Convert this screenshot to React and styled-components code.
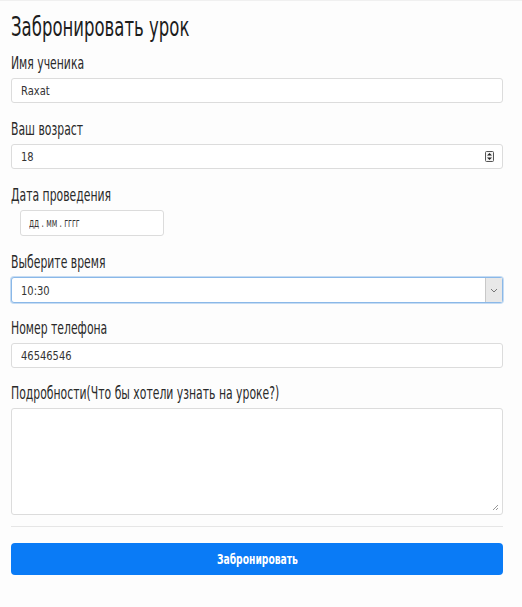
import React from "react";
import styled, { createGlobalStyle } from "styled-components";

const GlobalStyle = createGlobalStyle`
  body {
    margin: 0;
    background: #fdfdfd;
    font-family: "DejaVu Sans Condensed", "DejaVu Sans", sans-serif;
    font-stretch: condensed;
    color: #212529;
  }
`;

const Container = styled.div`
  padding: 11px 19px 0 11px;
  border-top: 1px solid #f0f0f0;
`;

// narrow look of the original font
const Narrow = styled.span`
  display: inline-block;
  white-space: nowrap;
  transform: scaleX(${(p) => p.$k || 0.67});
  transform-origin: ${(p) => (p.$center ? "center" : "left")};
`;

const Title = styled.h2`
  margin: 0 0 11px;
  font-size: 27px;
  font-weight: 400;
  line-height: 30px;
  color: #1d1d1d;
`;

const Group = styled.div`
  display: flex;
  flex-direction: column;
  align-items: ${(p) => (p.$inline ? "flex-start" : "stretch")};
  margin-bottom: ${(p) => (p.$tight ? 15 : 16)}px;
`;

const Label = styled.label`
  font-size: 18px;
  line-height: 20px;
  margin-bottom: 5px;
  color: #2a2a2a;
`;

const Field = styled.div`
  height: ${(p) => (p.$select ? 26 : 25)}px;
  box-sizing: border-box;
  display: flex;
  align-items: center;
  justify-content: space-between;
  padding: 0 8px 0 9px;
  border: 1px solid ${(p) => (p.$focus ? "#8ab8e8" : "#dcdcdc")};
  box-shadow: ${(p) => (p.$focus ? "0 0 0 1px #c6dcf3" : "none")};
  border-radius: 3px;
  background: #fff;
  font-size: 13px;
  color: #333;
  ${(p) => p.$date && `width: 144px; height: 26px; margin-left: 9px; padding-left: 8px; font-size: 12px;`}
  ${(p) => p.$select && `padding-right: 0;`}
`;

const Spin = styled.svg`
  width: 9px;
  height: 11px;
`;

const Caret = styled.div`
  width: 16px;
  height: 24px;
  border-left: 1px solid #c8c8c8;
  background: #e8e8e8;
  display: flex;
  align-items: center;
  justify-content: center;
`;

const TextArea = styled.div`
  height: 107px;
  box-sizing: border-box;
  border: 1px solid #dcdcdc;
  border-radius: 3px;
  background: #fff;
  display: flex;
  align-items: flex-end;
  justify-content: flex-end;
  padding: 3px;
`;

const Divider = styled.hr`
  border: 0;
  border-top: 1px solid #e6e6e6;
  margin: -5px 0 16px;
`;

const Button = styled.button`
  display: flex;
  justify-content: center;
  align-items: center;
  width: 100%;
  height: 32px;
  border: 0;
  border-radius: 4px;
  background: #0a7bf6;
  color: #fff;
  font-family: inherit;
  font-stretch: condensed;
  font-size: 14px;
  font-weight: 700;
`;

export default function App() {
  return (
    <>
      <GlobalStyle />
      <Container>
        <Title>
          <Narrow $k={0.68}>Забронировать урок</Narrow>
        </Title>
        <Group>
          <Label>
            <Narrow>Имя ученика</Narrow>
          </Label>
          <Field>
            <Narrow $k={0.85}>Raxat</Narrow>
          </Field>
        </Group>
        <Group>
          <Label>
            <Narrow>Ваш возраст</Narrow>
          </Label>
          <Field>
            <Narrow $k={0.85}>18</Narrow>
            <Spin viewBox="0 0 9 11">
              <rect x="0.5" y="0.5" width="8" height="10" rx="1" fill="#f4f4f4" stroke="#555" />
              <path d="M2 4.5 L4.5 2 L7 4.5 Z" fill="#222" />
              <path d="M2 6.5 L4.5 9 L7 6.5 Z" fill="#222" />
            </Spin>
          </Field>
        </Group>
        <Group $inline>
          <Label>
            <Narrow>Дата проведения</Narrow>
          </Label>
          <Field $date>
            <Narrow $k={0.68}>дд . мм . гггг</Narrow>
          </Field>
        </Group>
        <Group $tight>
          <Label>
            <Narrow>Выберите время</Narrow>
          </Label>
          <Field $focus $select>
            <Narrow $k={0.85}>10:30</Narrow>
            <Caret>
              <svg width="8" height="5" viewBox="0 0 8 5">
                <path d="M1 1 L4 4 L7 1" fill="none" stroke="#777" strokeWidth="1" />
              </svg>
            </Caret>
          </Field>
        </Group>
        <Group $tight>
          <Label>
            <Narrow>Номер телефона</Narrow>
          </Label>
          <Field>
            <Narrow $k={0.85}>46546546</Narrow>
          </Field>
        </Group>
        <Group>
          <Label>
            <Narrow>Подробности(Что бы хотели узнать на уроке?)</Narrow>
          </Label>
          <TextArea>
            <svg width="7" height="7" viewBox="0 0 7 7">
              <path d="M6 1 L1 6 M6 4 L4 6" stroke="#999" strokeWidth="1" />
            </svg>
          </TextArea>
        </Group>
        <Divider />
        <Button>
          <Narrow $k={0.73} $center>Забронировать</Narrow>
        </Button>
      </Container>
    </>
  );
}
